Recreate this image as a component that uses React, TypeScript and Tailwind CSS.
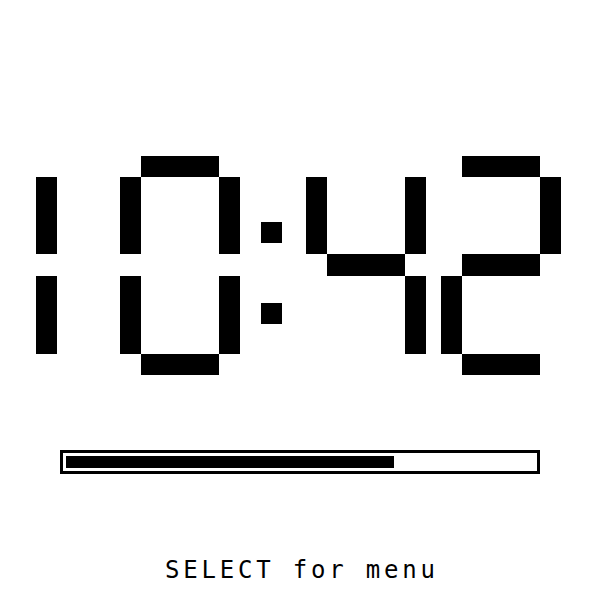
import React from "react";

type Seg = [number, number, number, number];

// segment rectangles of the "10:42" readout, in page pixels
const SEGMENTS: Seg[] = [
    // 1
    [36, 177, 21, 77],
    [36, 276, 21, 78],
    // 0
    [141, 156, 78, 21],
    [120, 177, 21, 77],
    [120, 276, 21, 78],
    [219, 177, 21, 77],
    [219, 276, 21, 78],
    [141, 354, 78, 21],
    // colon
    [261, 222, 21, 21],
    [261, 303, 21, 21],
    // 4
    [306, 177, 21, 77],
    [327, 254, 78, 22],
    [405, 177, 21, 77],
    [405, 276, 21, 78],
    // 2
    [462, 156, 78, 21],
    [540, 177, 21, 77],
    [462, 254, 78, 22],
    [441, 276, 21, 78],
    [462, 354, 78, 21],
];

function ClockReadout() {
    return (
        <svg width={600} height={219} viewBox="0 156 600 219" shapeRendering="crispEdges" className="block">
            {SEGMENTS.map(([x, y, w, h], i) => (
                <rect key={i} x={x} y={y} width={w} height={h} fill="#000" />
            ))}
        </svg>
    );
}

export default function App() {
    const progress = 0.7;

    return (
        <div className="w-[600px] h-[600px] bg-white flex flex-col items-center pt-[156px]">
            <ClockReadout />

            {/* progress bar */}
            <div className="mt-[75px] w-[480px] h-[24px] border-[3px] border-black p-[3px]">
                <div className="h-full bg-black" style={{ width: `${progress * 100}%` }} />
            </div>

            <div
                className="mt-[84px] text-[24px] leading-none tracking-[3.8px] pl-[3.8px] text-black whitespace-nowrap"
                style={{ fontFamily: '"DejaVu Sans Mono", monospace' }}
            >
                SELECT for menu
            </div>
        </div>
    );
}
